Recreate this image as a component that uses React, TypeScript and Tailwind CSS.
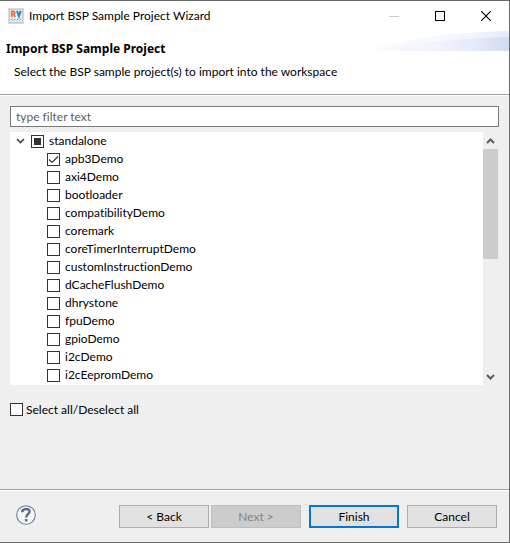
import { useState } from "react";

const projects = [
  "apb3Demo",
  "axi4Demo",
  "bootloader",
  "compatibilityDemo",
  "coremark",
  "coreTimerInterruptDemo",
  "customInstructionDemo",
  "dCacheFlushDemo",
  "dhrystone",
  "fpuDemo",
  "gpioDemo",
  "i2cDemo",
  "i2cEepromDemo",
];

type CheckState = "on" | "off" | "mixed";

function CheckBox({ id, state, onToggle }: { id: string; state: CheckState; onToggle: () => void }) {
  return (
    <span className="grid size-[13px] shrink-0">
      <input
        id={id}
        type="checkbox"
        checked={state === "on"}
        ref={(el) => {
          if (el) el.indeterminate = state === "mixed";
        }}
        onChange={onToggle}
        className="col-start-1 row-start-1 m-0 size-[13px] appearance-none border border-[#333333] bg-white"
      />
      {state !== "off" && (
        <svg viewBox="0 0 13 13" className="pointer-events-none col-start-1 row-start-1 size-[13px]">
          {state === "on" ? (
            <path d="M2 6.5 L5 9.5 L11 3.5" fill="none" stroke="#333333" strokeWidth="1.2" />
          ) : (
            <rect x="3" y="3" width="7" height="7" fill="#333333" />
          )}
        </svg>
      )}
    </span>
  );
}

function AppIcon() {
  return (
    <svg viewBox="0 0 16 16" className="size-4">
      <rect x="0.5" y="0.5" width="15" height="15" fill="none" stroke="#b4b4b4" strokeDasharray="1 1" />
      <rect x="1.5" y="1.5" width="13" height="13" fill="#e8edf0" stroke="#c6c9cb" />
      <path d="M3.8 9V3.4h1.5a1.4 1.4 0 0 1 0 2.9H4M5.4 6.2L7.3 9" fill="none" stroke="#f0793a" strokeWidth="1.9" />
      <path d="M9 2.8L10.9 8L12.8 2.8" fill="none" stroke="#1e8fc4" strokeWidth="2" />
      <path
        d="M4.5 10.5L3.5 11.5L4.5 12.5M11.5 10.5L12.5 11.5L11.5 12.5M6.2 12.3L7.2 11M8.8 12.3L9.8 11"
        fill="none"
        stroke="#3b8fbd"
        strokeWidth="1"
      />
    </svg>
  );
}

function Swoosh() {
  return (
    <svg viewBox="0 0 140 20" className="h-5 w-[140px] shrink-0">
      <defs>
        <linearGradient id="swoosh" x1="0" x2="1">
          <stop offset="0" stopColor="#f9fbfe" />
          <stop offset="0.5" stopColor="#f0f3fb" />
          <stop offset="0.75" stopColor="#e5eaf9" />
          <stop offset="1" stopColor="#d2dbf4" />
        </linearGradient>
      </defs>
      <path d="M0 20C24 9 75 2 140 0V20Z" fill="url(#swoosh)" />
      <path d="M0 20C24 9 75 2 140 0V6C105 7 50 10 0 20Z" fill="#ffffff" fillOpacity="0.45" />
    </svg>
  );
}

function HelpIcon() {
  return (
    <svg viewBox="0 0 20 20" className="size-5">
      <circle cx="10" cy="10" r="9.3" fill="#f6f7f9" stroke="#687c9c" strokeWidth="1.1" />
      <path
        d="M6.2 7.2C6.2 2.9 13.6 3 13.6 6.6C13.6 9.2 10.2 9.2 10.2 12.4"
        fill="none"
        stroke="#56698b"
        strokeWidth="2.4"
      />
      <rect x="8.9" y="14" width="2.6" height="2.5" rx="0.6" fill="#56698b" />
    </svg>
  );
}

function Chevron({ up = false, thick = false }: { up?: boolean; thick?: boolean }) {
  return (
    <svg viewBox="0 0 9 6" className="h-[6px] w-[9px]">
      <path
        d={up ? "M1 5L4.5 1.5L8 5" : "M1 1L4.5 4.5L8 1"}
        fill="none"
        stroke={thick ? "#5c5c5c" : "#404040"}
        strokeWidth={thick ? 2 : 1.6}
      />
    </svg>
  );
}

export default function App() {
  const [checked, setChecked] = useState<string[]>(["apb3Demo"]);
  const all = checked.length === projects.length;
  const rootState: CheckState = all ? "on" : checked.length > 0 ? "mixed" : "off";
  const toggleAll = () => setChecked(all ? [] : projects);
  const toggle = (name: string) =>
    setChecked((list) => (list.includes(name) ? list.filter((n) => n !== name) : [...list, name]));

  return (
    <div className="flex min-h-screen flex-col border-t border-r border-b border-[#6b6b6b] bg-[#efefef] font-['Lato','Noto_Sans',sans-serif] text-xs leading-4 text-black [font-variant-ligatures:none]">
      <div className="flex h-[30px] items-center bg-white pl-2">
        <AppIcon />
        <span className="ml-[5px] flex-1 pb-px">Import BSP Sample Project Wizard</span>
        <button aria-label="Minimize" disabled className="flex h-[29px] w-[46px] items-center justify-center">
          <svg viewBox="0 0 10 10" className="size-[10px]">
            <rect y="5" width="10" height="1" fill="#cccccc" />
          </svg>
        </button>
        <button aria-label="Maximize" className="flex h-[29px] w-[46px] items-center justify-center">
          <svg viewBox="0 0 10 10" className="size-[10px]">
            <rect x="0.5" y="0.5" width="9" height="9" fill="none" stroke="#000000" />
          </svg>
        </button>
        <button aria-label="Close" className="flex h-[29px] w-[46px] items-center justify-center">
          <svg viewBox="0 0 10 10" className="size-[10px]">
            <path d="M0 0L10 10M10 0L0 10" stroke="#000000" strokeWidth="1.1" />
          </svg>
        </button>
      </div>

      <header className="border-b border-[#a0a0a0] bg-white pb-3">
        <div className="flex items-start justify-between">
          <h1 className="mt-2 pl-[6px] font-['Noto_Sans','Open_Sans',sans-serif] text-xs leading-5 font-bold">
            Import BSP Sample Project
          </h1>
          <Swoosh />
        </div>
        <p className="mt-[3px] pl-[14px] leading-5">Select the BSP sample project(s) to import into the workspace</p>
      </header>

      <main className="flex flex-1 flex-col border-t border-white px-[10px] pt-[10px]">
        <input
          type="text"
          aria-label="Filter"
          placeholder="type filter text"
          className="h-[21px] border border-[#7a7a7a] bg-white px-[5px] outline-none placeholder:text-[#606060]"
        />

        <div className="mt-[5px] flex bg-white">
          <ul className="flex-1 pb-px">
            <li>
              <div className="flex h-[18px] items-center pl-[6px]">
                <button aria-label="Collapse standalone" className="mr-[6px] flex size-[9px] items-center">
                  <Chevron />
                </button>
                <CheckBox id="standalone" state={rootState} onToggle={toggleAll} />
                <label htmlFor="standalone" className="pl-[5px]">standalone</label>
              </div>
              <ul>
                {projects.map((name) => (
                  <li key={name} className="flex h-[18px] items-center pl-[37px]">
                    <CheckBox id={name} state={checked.includes(name) ? "on" : "off"} onToggle={() => toggle(name)} />
                    <label htmlFor={name} className="pl-[5px]">{name}</label>
                  </li>
                ))}
              </ul>
            </li>
          </ul>
          <div className="flex w-4 flex-col bg-[#efefef] pr-px">
            <button aria-label="Scroll up" className="flex h-[17px] items-center justify-center">
              <Chevron up thick />
            </button>
            <div className="h-[110px] bg-[#cccccc]" />
            <button aria-label="Scroll down" className="mt-auto flex h-[17px] items-center justify-center">
              <Chevron thick />
            </button>
          </div>
        </div>

        <div className="mt-4 flex h-[17px] items-center">
          <CheckBox id="select-all" state={all ? "on" : "off"} onToggle={toggleAll} />
          <label htmlFor="select-all" className="pl-[3px]">Select all/Deselect all</label>
        </div>
      </main>

      <footer className="border-t border-[#a0a0a0]">
        <div className="flex items-start border-t border-white pt-[14px] pr-3 pb-[14px] pl-4">
          <button aria-label="Help">
            <HelpIcon />
          </button>
          <div className="ml-auto flex gap-2">
            <div className="flex gap-[2px]">
              <button className="h-[23px] w-[90px] border border-[#adadad] bg-[#e1e1e1]">&lt; Back</button>
              <button disabled className="h-[23px] w-[90px] border border-[#bfbfbf] bg-[#cccccc] text-[#838383]">
                Next &gt;
              </button>
            </div>
            <button className="h-[23px] w-[90px] border-2 border-[#0078d7] bg-[#e1e1e1]">Finish</button>
            <button className="h-[23px] w-[90px] border border-[#adadad] bg-[#e1e1e1]">Cancel</button>
          </div>
        </div>
      </footer>
    </div>
  );
}
